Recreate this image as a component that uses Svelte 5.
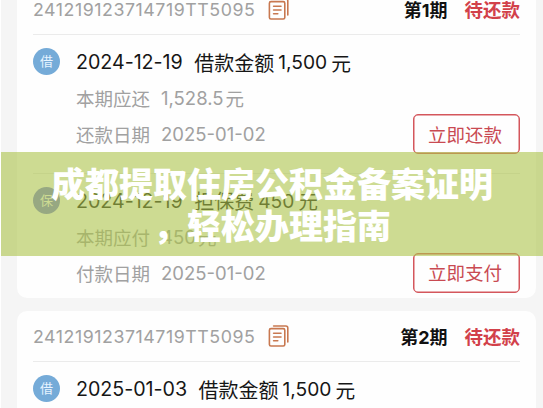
<script>
  const serial = '241219123714719TT5095';
  const cards = [
    {
      period: '1',
      entries: [
        { kind: '借', date: '2024-12-19', label: '借款金额', amount: '1,500', due: '本期应还', dueAmount: '1,528.5', dayLabel: '还款日期', day: '2025-01-02', action: '立即还款' },
        { kind: '保', date: '2024-12-19', label: '担保费', amount: '450', due: '本期应付', dueAmount: '450', dayLabel: '付款日期', day: '2025-01-02', action: '立即支付' }
      ]
    },
    {
      period: '2',
      entries: [
        { kind: '借', date: '2025-01-03', label: '借款金额', amount: '1,500' }
      ]
    }
  ];
</script>

<main class="screen">
  <div class="list">
    {#each cards as card}
      <section class="card">
        <header>
          <span class="serial">{serial}</span>
          <svg class="copy" width="21" height="23" viewBox="0 0 21 23" fill="none" stroke="#c87850" stroke-width="1.6" stroke-linecap="round" stroke-linejoin="round">
            <rect x="1.4" y="3.6" width="15.4" height="17.4" rx="1.6" />
            <path d="M5.6 1H17.9Q19.8 1 19.8 2.9V17M5.6 8.2H13M5.6 12H13M5.6 15.8H9.8" />
          </svg>
          <b class="period">第<i>{card.period}</i>期</b>
          <b class="status">待还款</b>
        </header>
        {#each card.entries as e}
          <article>
            <div class="badge" class:guarantee={e.kind === '保'}>{e.kind}</div>
            <div class="details">
              <h3><span class="date">{e.date}</span><span class="label">{e.label}</span><span class="amount">{e.amount}</span><span>元</span></h3>
              {#if e.due}
                <p><span class="name">{e.due}</span><span class="num">{e.dueAmount}</span><span class="unit">元</span></p>
                <p><span class="name">{e.dayLabel}</span><span class="num">{e.day}</span></p>
              {/if}
            </div>
            {#if e.action}<button>{e.action}</button>{/if}
          </article>
        {/each}
      </section>
    {/each}
  </div>
  <div class="banner"><div>成都提取住房公积金备案证明</div><div>，轻松办理指南</div></div>
</main>

<style>
  .screen {
    position: relative;
    width: 543px;
    height: 408px;
    overflow: hidden;
    box-sizing: border-box;
    border-left: 1px solid #fff;
    background: #f5f5f5;
    font-family: Inter, "Noto Sans CJK SC", sans-serif;
    color: #161616;
  }
  .list {
    display: flex;
    flex-direction: column;
    gap: 13px;
    margin: -16px 7px 0 16px;
  }
  .card {
    flex: none;
    padding: 0 16px;
    border-radius: 10px;
    background: #fefefe;
  }
  header {
    display: flex;
    align-items: center;
    height: 50px;
    white-space: nowrap;
  }
  .serial {
    width: 234.5px;
    font-size: 17.8px;
    letter-spacing: 0.54px;
    color: #a1a1a1;
  }
  .copy { flex: none; }
  .period {
    margin-left: auto;
    font-size: 18px;
    color: #111;
  }
  .period i { font-style: normal; }
  .status {
    margin-left: 17px;
    font-size: 18.5px;
    color: #d2414a;
  }
  article {
    display: flex;
    height: 138.5px;
    box-sizing: border-box;
    border-top: 1px solid #ebebeb;
  }
  article:last-child { height: 125.5px; }
  .badge {
    flex: none;
    width: 27px;
    height: 27px;
    margin-top: 13px;
    border-radius: 50%;
    background: #75abd8;
    color: #e7f4ff;
    font-size: 13px;
    line-height: 26px;
    text-align: center;
  }
  .guarantee {
    background: #787fd8;
    color: #fff;
  }
  .details {
    flex: 1;
    padding: 9px 0 0 16px;
    white-space: nowrap;
  }
  h3, p {
    display: flex;
    align-items: center;
    margin: 0;
    height: 36px;
    font-weight: 400;
  }
  h3 { font-size: 19.7px; }
  .label { margin-left: 11.5px; font-size: 20px; }
  .date { letter-spacing: -0.05px; }
  .amount { margin: 0 4px; font-size: 19.2px; }
  p {
    font-size: 18.5px;
    color: #a1a1a1;
  }
  .num { margin-left: 11px; }
  .unit { margin-left: 2px; }
  button {
    align-self: flex-start;
    width: 107px;
    height: 40px;
    margin-top: 79px;
    padding: 0 3px 1px 0;
    border: 1px solid #d4565c;
    border-radius: 5px;
    box-shadow: inset 0 0 0 0.5px #d4565c;
    background: transparent;
    color: #c94a52;
    font: 18.5px "Noto Sans CJK SC", sans-serif;
  }
  .banner {
    position: absolute;
    top: 152px;
    left: -1px;
    width: 543px;
    height: 104px;
    box-sizing: border-box;
    padding: 10px 0 0 1px;
    background: rgba(172, 195, 73, 0.6);
    color: #fff;
    font: 900 34px/42px "Noto Sans CJK SC", sans-serif;
    text-align: center;
    white-space: nowrap;
  }
</style>
